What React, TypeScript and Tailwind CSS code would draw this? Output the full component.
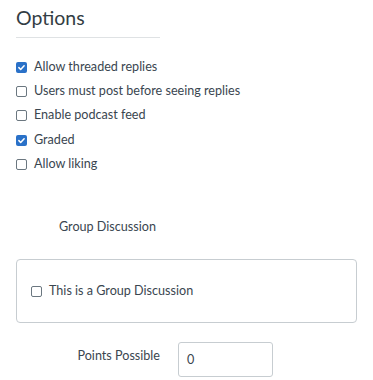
import React from 'react';

const Box = ({ checked }: { checked?: boolean }) =>
  checked ? (
    <span className="w-[11px] h-[11px] rounded-[2px] bg-[#2a71c8] flex items-center justify-center shrink-0">
      <svg viewBox="0 0 12 12" className="w-[9px] h-[9px]" fill="none" stroke="white" strokeWidth={2} strokeLinecap="round" strokeLinejoin="round">
        <path d="M2.5 6.2l2.4 2.4 4.6-5" />
      </svg>
    </span>
  ) : (
    <span className="w-[11px] h-[11px] rounded-[2px] border border-[#6b7780] bg-white shrink-0" />
  );

const options = [
  { label: 'Allow threaded replies', checked: true },
  { label: 'Users must post before seeing replies', checked: false },
  { label: 'Enable podcast feed', checked: false },
  { label: 'Graded', checked: true },
  { label: 'Allow liking', checked: false },
];

export default function App() {
  return (
    <div className="w-[373px] h-[380px] bg-white text-[#3a4650] font-['Lato',sans-serif] px-4 overflow-hidden">
      {/* Options header */}
      <h2 className="text-[19.5px] leading-[24px] text-[#333d44] pt-[6px] pb-[7px] w-[144px] border-b border-[#dfe2e4]">Options</h2>

      {/* Option checkboxes */}
      <div className="mt-[17px] flex flex-col">
        {options.map((o) => (
          <label key={o.label} className="h-[24.3px] flex items-center gap-[7px] text-[12.6px]">
            <Box checked={o.checked} />
            <span>{o.label}</span>
          </label>
        ))}
      </div>

      {/* Group discussion */}
      <div className="mt-[43px] pl-[43px] text-[12.6px] leading-[16px]">Group Discussion</div>
      <div className="mt-[24px] h-[64px] w-[341px] border border-[#c7cdd1] rounded-[4px] flex items-center pl-[14px] gap-[7px] text-[12.6px]">
        <Box />
        <span>This is a Group Discussion</span>
      </div>

      {/* Points possible */}
      <div className="mt-[19px] flex items-start">
        <span className="w-[162px] text-right pr-[18px] text-[12.6px] pt-[5px]">Points Possible</span>
        <div className="w-[95px] h-[35px] border border-[#c7cdd1] rounded-[3px] flex items-center pl-[8px] text-[12.6px]">0</div>
      </div>
    </div>
  );
}
